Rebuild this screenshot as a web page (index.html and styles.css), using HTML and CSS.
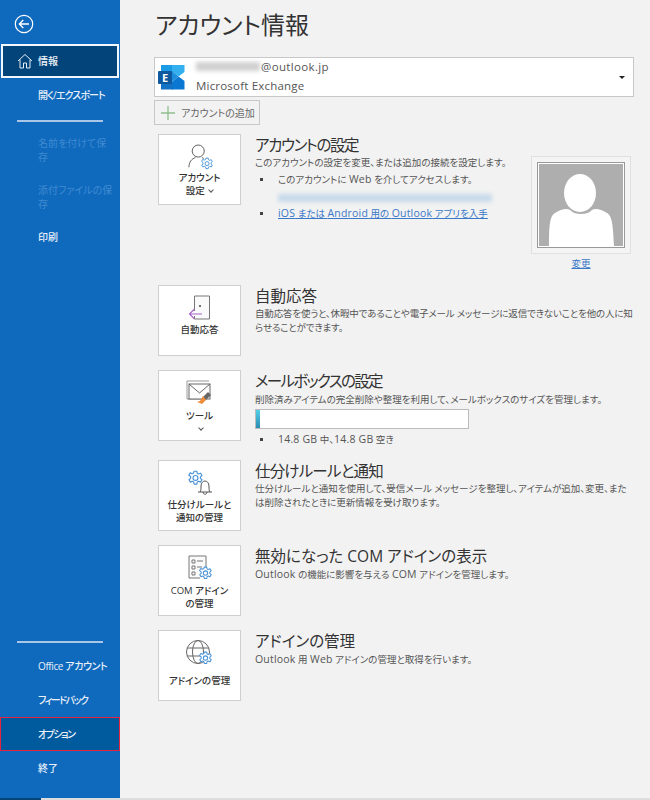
FILE: index.html
```html
<!DOCTYPE html>
<html lang="ja">
<head>
<meta charset="utf-8">
<title>アカウント情報</title>
<link rel="stylesheet" href="styles.css">
</head>
<body>
<svg class="defs" width="0" height="0">
  <symbol id="gear" viewBox="0 0 16 16">
    <path d="M6.700 1.200h2.600l.4 2 1.200.6 1.900-.8 1.300 2.200-1.500 1.300v1.400l1.500 1.300-1.300 2.200-1.900-.8-1.200.7-.4 2H6.700l-.4-2-1.200-.7-1.900.8-1.300-2.200 1.500-1.300V6.200L1.700 4.900 3 2.700l1.900.8 1.200-.6z" fill="#fff" stroke="#4a93d8" stroke-width="1.100" stroke-linejoin="round"/>
    <circle cx="8" cy="7.500" r="2.300" fill="none" stroke="#4a93d8" stroke-width="1.100"/>
  </symbol>
</svg>
<div class="app">
  <nav class="side">
    <div class="back">
      <svg width="20" height="20" viewBox="0 0 20 20"><circle cx="10" cy="10" r="8.700" fill="none" stroke="#fff" stroke-width="1.200"/><path d="M15 10H5.500M9.300 6l-4 4 4 4" fill="none" stroke="#fff" stroke-width="1.300"/></svg>
    </div>
    <a class="item active">
      <svg class="home" width="16" height="16" viewBox="0 0 16 16"><path d="M1 8l7-6.500L15 8M3 6.500V15h3.500v-5h3v5H13V6.500" fill="none" stroke="#e6eef7" stroke-width="1"/></svg>
      <span>情報</span>
    </a>
    <a class="item k2">開く/エクスポート</a>
    <div class="rule"></div>
    <a class="item two off"><span>名前を付けて保<br>存</span></a>
    <a class="item two off"><span>添付ファイルの保<br>存</span></a>
    <a class="item">印刷</a>
    <div class="grow"></div>
    <div class="rule low"></div>
    <a class="item k3">Office アカウント</a>
    <a class="item k1">フィードバック</a>
    <a class="item picked k1">オプション</a>
    <a class="item">終了</a>
  </nav>

  <main class="main">
    <h1 class="title">アカウント情報</h1>

    <div class="account">
      <svg class="xlogo" width="28" height="28" viewBox="0 0 28 28">
        <path d="M3 2h12v7H3z" fill="#1c9be6"/>
        <path d="M14 2h12.500v7L20.500 13.500 14 8z" fill="#35b0ee"/>
        <path d="M14 19l6.500-5.500 6 4.500v8.500H14z" fill="#0a78d2"/>
        <path d="M3 20h12v6.500H3z" fill="#1272c4"/>
        <path d="M14 8l6.500 5.500L14 19z" fill="#1b8fdc"/>
        <rect x="0" y="8" width="14" height="13" rx="1" fill="#0f5a9e"/>
        <text class="xletter" x="7" y="18.500" text-anchor="middle">E</text>
      </svg>
      <div class="acct-text">
        <div class="mail"><span class="blur-mail"></span>@outlook.jp</div>
        <div class="kind">Microsoft Exchange</div>
      </div>
      <span class="caret"></span>
    </div>

    <div class="add">
      <svg width="14" height="14" viewBox="0 0 14 14"><path d="M7 0v14M0 7h14" stroke="#8fc08f" stroke-width="1.300"/></svg>
      <span>アカウントの追加</span>
    </div>

    <section class="row first">
      <div class="card">
        <svg class="ico person" width="26" height="28" viewBox="0 0 28 30">
          <circle cx="11" cy="7.500" r="6.500" fill="none" stroke="#555" stroke-width="1"/>
          <path d="M1 25c0-6 3-9 7-10.500M15 14.500l2 1" fill="none" stroke="#555" stroke-width="1"/>
          <use href="#gear" x="13" y="14" width="15" height="15"/>
        </svg>
        <div class="label up">アカウント<br>設定 <span class="chev"></span></div>
      </div>
      <div class="body">
        <h2 class="t1">アカウントの設定</h2>
        <div class="split">
          <div class="col">
            <p>このアカウントの設定を変更、または追加の接続を設定します。</p>
            <ul>
              <li>このアカウントに <span class="la">Web</span> を介してアクセスします。</li>
              <li class="noBullet"><span class="blur-link"></span></li>
              <li><a class="link"><span class="la">iOS</span> または <span class="la">Android</span> 用の <span class="la">Outlook</span> アプリを入手</a></li>
            </ul>
          </div>
          <div class="photo">
            <div class="frame">
              <div class="pic">
                <svg width="84" height="82" viewBox="0 0 84 82"><rect width="84" height="82" fill="#aeaeae"/><ellipse cx="41" cy="29" rx="16" ry="19" fill="#fff"/><path d="M10 82c0-22 1-30 6-33 6-4 12-5 15-3 3 3 7 4 11 4s8-1 11-4c3-2 9-1 15 3 5 3 6 11 7 33z" fill="#fff"/></svg>
              </div>
            </div>
            <a class="link change">変更</a>
          </div>
        </div>
      </div>
    </section>

    <section class="row">
      <div class="card">
        <svg class="ico" width="24" height="26" viewBox="0 0 24 26">
          <path d="M6.500 16V1h15v23h-15v-3" fill="#fafafa" stroke="#777" stroke-width="1"/>
          <circle cx="12" cy="11" r="1" fill="#444"/>
          <path d="M14 19H1.500M6.500 14l-5 5 5 5" fill="none" stroke="#a763c9" stroke-width="1.100"/>
        </svg>
        <div class="label">自動応答</div>
      </div>
      <div class="body">
        <h2>自動応答</h2>
        <p class="wide tight">自動応答を使うと、休暇中であることや電子メール メッセージに返信できないことを他の人に知<br>らせることができます。</p>
      </div>
    </section>

    <section class="row mailbox">
      <div class="card">
        <svg class="ico" width="27" height="27" viewBox="0 0 27 27">
          <path d="M1 1h22" stroke="#999" stroke-width="1"/>
          <path d="M1 1v18h14" fill="none" stroke="#999" stroke-width="1"/>
          <rect x="3" y="4" width="21" height="15" fill="#fff" stroke="#666" stroke-width="1"/>
          <path d="M3 4l10.500 9L24 4" fill="none" stroke="#666" stroke-width="1"/>
          <path d="M22 12l3 3-5 5-3-3z" fill="#666"/>
          <path d="M17 16l3 4-4 4-5-2 3-1z" fill="#ed8b3b"/>
        </svg>
        <div class="label">ツール<br><span class="chev"></span></div>
      </div>
      <div class="body">
        <h2 class="t2">メールボックスの設定</h2>
        <p>削除済みアイテムの完全削除や整理を利用して、メールボックスのサイズを管理します。</p>
        <div class="meter"><div class="fill"></div></div>
        <ul><li><span class="la">14.8 GB</span> 中、<span class="la">14.8 GB</span> 空き</li></ul>
      </div>
    </section>

    <section class="row">
      <div class="card">
        <svg class="ico" width="26" height="26" viewBox="0 0 26 26">
          <use href="#gear" x="0" y="0" width="17" height="17"/>
          <path d="M11 22h14M13 22c1-1 1-3 1-6s2-5 4-5 4 2 4 5 0 5 1 6M16 22c0 3 4 3 4 0" fill="none" stroke="#555" stroke-width="1"/>
        </svg>
        <div class="label">仕分けルールと<br>通知の管理</div>
      </div>
      <div class="body">
        <h2 class="t3">仕分けルールと通知</h2>
        <p class="wide">仕分けルールと通知を使用して、受信メール メッセージを整理し、アイテムが追加、変更、また<br>は削除されたときに更新情報を受け取ります。</p>
      </div>
    </section>

    <section class="row">
      <div class="card">
        <svg class="ico" width="26" height="26" viewBox="0 0 26 26">
          <path d="M13 23H2V1h17v12" fill="#fafafa" stroke="#777" stroke-width="1"/>
          <path d="M5 5h3v3H5zM5 11h3v3H5zM5 17h3v3H5zM10 6h6M10 12h5" fill="none" stroke="#777" stroke-width="1"/>
          <use href="#gear" x="11" y="11" width="15" height="15"/>
        </svg>
        <div class="label com">COM アドイン<br>の管理</div>
      </div>
      <div class="body">
        <h2>無効になった COM アドインの表示</h2>
        <p><span class="la">Outlook</span> の機能に影響を与える <span class="la">COM</span> アドインを管理します。</p>
      </div>
    </section>

    <section class="row">
      <div class="card">
        <svg class="ico" width="27" height="26" viewBox="0 0 27 26">
          <circle cx="12" cy="12" r="11.500" fill="none" stroke="#666" stroke-width="1"/>
          <ellipse cx="12" cy="12" rx="5.500" ry="11.500" fill="none" stroke="#666" stroke-width="1"/>
          <path d="M1 8h22M1 16h22" stroke="#666" stroke-width="1"/>
          <use href="#gear" x="12" y="11" width="15" height="15"/>
        </svg>
        <div class="label addin">アドインの管理</div>
      </div>
      <div class="body">
        <h2>アドインの管理</h2>
        <p><span class="la">Outlook</span> 用 <span class="la">Web</span> アドインの管理と取得を行います。</p>
      </div>
    </section>
  </main>
</div>
<div class="scroll"><span class="thumb"></span></div>
</body>
</html>
```
FILE: styles.css
```css
* { box-sizing: border-box; }
html, body { margin: 0; height: 800px; overflow: hidden; }
body {
  font-family: "Open Sans", "Noto Sans CJK JP", sans-serif;
  font-feature-settings: "palt";
  background: #f2f2f2;
  color: #444;
  position: relative;
}
.defs { position: absolute; }
.app { display: flex; height: 800px; }

.side {
  width: 120px;
  flex: none;
  background: #0f69bd;
  color: #e8f0f9;
  display: flex;
  flex-direction: column;
  font-size: 10px;
  padding-bottom: 15px;
}
.back { height: 44px; padding: 14px 0 0 14px; }
.item {
  display: flex;
  align-items: center;
  height: 34px;
  padding-left: 38px;
  padding-right: 2px;
  font-weight: 500;
  line-height: 14px;
  flex: none;
}
.k1 { letter-spacing: -1.500px; }
.k2 { letter-spacing: -.9px; }
.k3 { letter-spacing: -.4px; }
.item.active {
  background: #03457a;
  border: 2px solid #f3f6fa;
  margin: 0 1px;
  padding-left: 14px;
  gap: 5px;
  color: #f0f4f9;
}
.home { flex: none; }
.item.two { height: 47px; align-items: flex-start; padding-top: 7px; padding-right: 0; }
.item.two + .item.two { height: 44px; }
.item.off { color: #3f8bd2; font-weight: 400; }
.item.picked {
  background: #005a9e;
  border: 1px solid #e8223f;
  padding-left: 37px;
}
.rule {
  height: 2px;
  background: #a8c6e6;
  margin: 8px 17px 7px;
  flex: none;
}
.rule.low { margin-bottom: 6px; }
.grow { flex: 1; }

.main { flex: 1; padding: 0 16px 0 34px; min-width: 0; }
.title {
  margin: 0 0 15px 1px;
  font-size: 24px;
  font-weight: 400;
  line-height: 42px;
  height: 42px;
  padding-top: 4px;
  color: #333;
}
.account {
  display: flex;
  align-items: center;
  height: 40px;
  background: #fff;
  border: 1px solid #c8c8c8;
  padding: 0 8px 0 3px;
  gap: 10px;
  margin-bottom: 3px;
}
.xletter { font-size: 11px; font-weight: 700; fill: #fff; font-family: "Open Sans", sans-serif; }
.xlogo { flex: none; }
.acct-text { flex: 1; font-size: 11.500px; line-height: 19px; letter-spacing: .2px; color: #555; padding-bottom: 2px; }
.mail { display: flex; align-items: center; letter-spacing: .35px; }
.blur-mail { width: 64px; height: 9px; background: #cfcfcf; filter: blur(2px); margin-right: 1px; }
.caret { width: 0; height: 0; border: 3px solid transparent; border-top: 3px solid #222; border-bottom: 0; }
.add {
  display: flex;
  align-items: center;
  gap: 6px;
  height: 25px;
  width: 106px;
  padding-left: 6px;
  border: 1px solid #c8c8c8;
  font-size: 10px;
  color: #666;
  margin-bottom: 9px;
}
.row { display: flex; gap: 14px; margin-left: 4px; margin-bottom: 14px; min-height: 71px; }
.row.mailbox { margin-bottom: 12px; }
.card {
  width: 83px;
  height: 71px;
  flex: none;
  background: #fff;
  border: 1px solid #cfcfcf;
  display: flex;
  flex-direction: column;
  align-items: center;
  padding-top: 9px;
}
.ico { flex: none; }
.person { margin-left: 3px; }
.label {
  font-size: 9.500px;
  line-height: 13px;
  text-align: center;
  color: #333;
  font-weight: 500;
  margin-top: 2px;
}
.label.up { margin-top: -1px; }
.label.com { margin-top: 3px; }
.label.addin { margin-top: 8px; }
.chev {
  display: inline-block;
  width: 4px;
  height: 4px;
  border-right: 1px solid #555;
  border-bottom: 1px solid #555;
  transform: rotate(45deg);
  vertical-align: 2px;
  margin-left: 2px;
}
.body { flex: 1; min-width: 0; }
h2 {
  margin: 0;
  font-size: 15.500px;
  font-weight: 400;
  line-height: 22px;
  color: #333;
}
.t1 { letter-spacing: -1.400px; }
.t2 { letter-spacing: -1.700px; margin-bottom: 1px; }
.t3 { letter-spacing: -.8px; }
p { margin: 0; font-size: 9.500px; line-height: 14px; color: #555; }
.wide { margin-right: -10px; }
.tight { letter-spacing: -.15px; }
.la { font-size: 10.500px; letter-spacing: .2px; }
ul { list-style: none; margin: 0; padding: 0; }
li {
  font-size: 9.500px;
  line-height: 17px;
  height: 17px;
  color: #555;
  padding-left: 23px;
  position: relative;
}
li::before {
  content: "";
  position: absolute;
  left: 5px;
  top: 7px;
  width: 3px;
  height: 3px;
  background: #444;
}
li.noBullet { display: flow-root; }
li.noBullet::before { display: none; }
.link { color: #3a78c8; text-decoration: underline; }
.blur-link { display: block; width: 214px; height: 8px; margin-top: 6px; background: #c6d9ea; filter: blur(2px); }
.split { display: flex; justify-content: space-between; }
.col { width: 268px; }
.col p { margin-bottom: 1px; }
.photo { width: 100px; margin-right: 3px; display: flex; flex-direction: column; align-items: center; }
.frame { width: 100px; height: 98px; background: #f4f4f4; border: 1px solid #e0e0e0; padding: 5px; }
.pic { width: 88px; height: 86px; border: 1px solid #999; padding: 1px; background: #fff; }
.pic svg { display: block; }
.change { font-size: 9.500px; margin-top: 3px; line-height: 14px; }
.meter {
  width: 214px;
  height: 20px;
  background: #fff;
  border: 1px solid #bbb;
  margin-top: 2px;
  margin-bottom: 2px;
}
.fill { width: 4px; height: 100%; background: linear-gradient(#54d0ea, #2a8bb0); }
.scroll {
  position: absolute;
  left: 0;
  right: 0;
  bottom: 0;
  height: 2px;
  background: #ddd;
}
.thumb { display: block; width: 41px; height: 2px; background: #074578; }
```
